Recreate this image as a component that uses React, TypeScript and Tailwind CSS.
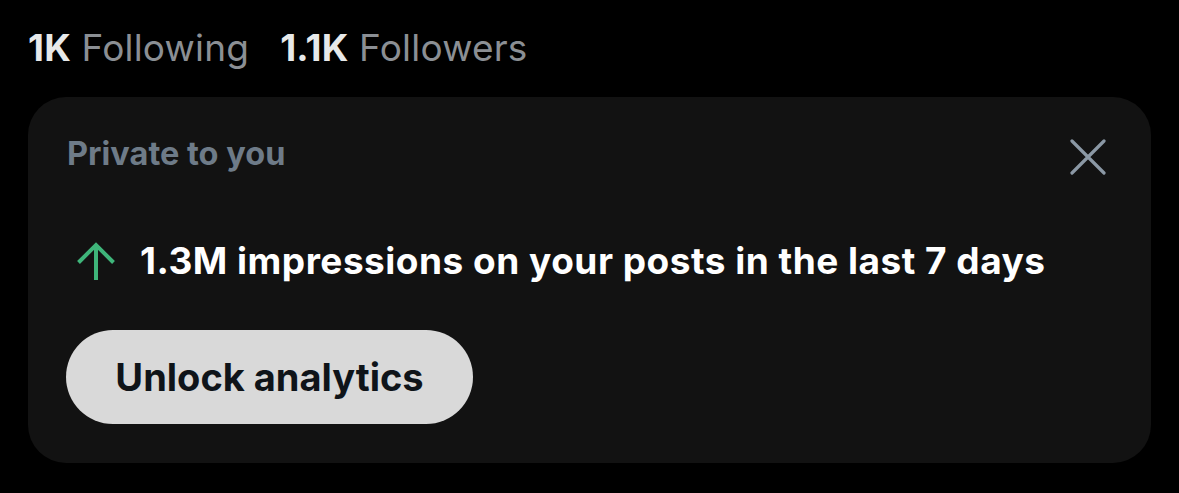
import React from "react";

export default function App() {
  return (
    <div
      className="w-[1179px] h-[493px] bg-black overflow-hidden"
      style={{ fontFamily: "Inter, 'Noto Sans', sans-serif" }}
    >
      <div className="pl-[28px] pt-[28px] flex items-baseline gap-[31px] text-[37px] leading-[40px] tracking-[0.2px]">
        <div>
          <span className="font-bold text-[#e7e9ea]">1K</span>
          <span className="text-[#8b8f94]"> Following</span>
        </div>
        <div>
          <span className="font-bold text-[#e7e9ea]">1.1K</span>
          <span className="text-[#8b8f94]"> Followers</span>
        </div>
      </div>
      <div className="ml-[28px] mt-[29px] w-[1123px] h-[366px] rounded-[38px] bg-[#121212] pl-[39px] pr-[45px] pt-[38px]">
        <div className="flex items-start justify-between">
          <div className="text-[32.5px] leading-[38px] font-bold text-[#6e7b88]">
            Private to you
          </div>
          <svg width="38" height="38" viewBox="0 0 38 38" className="mt-[3px]">
            <path d="M4 3 L36 35 M36 3 L4 35" stroke="#8b98a5" strokeWidth="3.2" strokeLinecap="round" />
          </svg>
        </div>
        <div className="mt-[63px] flex items-center gap-[24px]">
          <svg width="40" height="40" viewBox="0 0 40 40" className="ml-[9px]">
            <path d="M20 4 L20 39 M2.5 21.5 L20 4 L37.5 21.5" stroke="#3fb57a" strokeWidth="4" fill="none" strokeLinecap="butt" strokeLinejoin="miter" />
          </svg>
          <div className="text-[37px] leading-[44px] font-bold text-white tracking-[0.5px]">
            1.3M impressions on your posts in the last 7 days
          </div>
        </div>
        <button className="mt-[47px] -ml-[1px] h-[94px] w-[407px] rounded-full bg-[#d9d9d9] text-[#0f1419] text-[38px] font-bold flex items-center justify-center">
          Unlock analytics
        </button>
      </div>
    </div>
  );
}
